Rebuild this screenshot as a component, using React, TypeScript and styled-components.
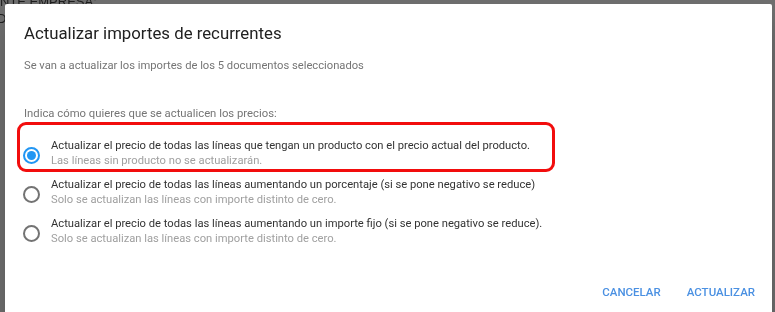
import styled, { createGlobalStyle } from "styled-components"
import { FC } from "react"

const GlobalStyle = createGlobalStyle`
  html, body {
    margin: 0;
    padding: 0;
    height: 100%;
    overflow: hidden;
    font-family: Roboto, "Liberation Sans", sans-serif;
  }
`

interface Option {
  id: number
  label: string
  hint: string
}

const options: Option[] = [
  {
    id: 1,
    label: "Actualizar el precio de todas las líneas que tengan un producto con el precio actual del producto.",
    hint: "Las líneas sin producto no se actualizarán.",
  },
  {
    id: 2,
    label: "Actualizar el precio de todas las líneas aumentando un porcentaje (si se pone negativo se reduce)",
    hint: "Solo se actualizan las líneas con importe distinto de cero.",
  },
  {
    id: 3,
    label: "Actualizar el precio de todas las líneas aumentando un importe fijo (si se pone negativo se reduce).",
    hint: "Solo se actualizan las líneas con importe distinto de cero.",
  },
]

interface RadioProps {
  checked: boolean
}

const Radio: FC<RadioProps> = ({ checked }) => (
  <RadioCircle $checked={checked}>{checked && <RadioDot />}</RadioCircle>
)

const App = () => {
  const selected = 1

  return (
    <>
      <GlobalStyle />
      <Backdrop>
        <BehindText>NTE EMPRESA:</BehindText>
        <BehindText>D</BehindText>
      </Backdrop>
      <Dialog>
        <Title>Actualizar importes de recurrentes</Title>
        <Subtitle>Se van a actualizar los importes de los 5 documentos seleccionados</Subtitle>
        <Question>Indica cómo quieres que se actualicen los precios:</Question>
        <OptionList>
          {options.map(item => (
            <OptionRow key={item.id}>
              <Radio checked={item.id === selected} />
              <OptionText>
                <span className="label">{item.label}</span>
                <span className="hint">{item.hint}</span>
              </OptionText>
            </OptionRow>
          ))}
          <Highlight />
        </OptionList>
        <Actions>
          <TextButton>Cancelar</TextButton>
          <TextButton>Actualizar</TextButton>
        </Actions>
      </Dialog>
    </>
  )
}

export default App

const Backdrop = styled.div`
  position: fixed;
  inset: 0;
  background: #6f6f6f;
  display: flex;
  flex-direction: column;
`

const BehindText = styled.div`
  font-family: "Liberation Sans", Arial, sans-serif;
  font-size: 13px;
  line-height: 14px;
  color: #1e1e1e;
  margin-top: -5px;
  &:nth-child(2) {
    margin-top: 3px;
    margin-left: -3px;
  }
`

const Dialog = styled.div`
  position: absolute;
  top: 4px;
  left: 5px;
  width: 767px;
  height: 330px;
  background: #fff;
  border-radius: 2px;
  box-shadow: 0 11px 15px -7px rgba(0, 0, 0, 0.2), 0 24px 38px 3px rgba(0, 0, 0, 0.14);
  box-sizing: border-box;
  padding: 18px 5px 0 19px;
  display: flex;
  flex-direction: column;
`

const Title = styled.h2`
  margin: 0;
  font-size: 16.8px;
  font-weight: 400;
  line-height: 22px;
  color: #212121;
`

const Subtitle = styled.p`
  margin: 14px 0 0;
  font-size: 11.2px;
  line-height: 16px;
  color: #757575;
`

const Question = styled.p`
  margin: 32px 0 0;
  font-size: 11.3px;
  line-height: 16px;
  color: #757575;
`

const OptionList = styled.div`
  position: relative;
  margin-top: 16px;
  display: flex;
  flex-direction: column;
  gap: 9px;
`

const OptionRow = styled.div`
  display: flex;
  align-items: center;
  gap: 11px;
`

const RadioCircle = styled.span<{ $checked: boolean }>`
  box-sizing: border-box;
  flex: none;
  width: 17px;
  height: 17px;
  margin: 5px 0 0 -1px;
  border-radius: 50%;
  border: 2px solid ${p => (p.$checked ? "#2196f3" : "#737373")};
  display: inline-flex;
  align-items: center;
  justify-content: center;
`

const RadioDot = styled.span`
  width: 9px;
  height: 9px;
  border-radius: 50%;
  background: #2196f3;
`

const OptionText = styled.div`
  display: flex;
  flex-direction: column;
  font-size: 11.2px;
  line-height: 15px;
  .label {
    color: #333;
  }
  .hint {
    color: #a0a0a0;
  }
`

const Highlight = styled.div`
  position: absolute;
  left: -7px;
  top: -16px;
  width: 538px;
  height: 50px;
  box-sizing: border-box;
  border: 3px solid #f20d0d;
  border-radius: 9px;
  pointer-events: none;
`

const Actions = styled.div`
  margin-top: auto;
  margin-bottom: 29px;
  display: flex;
  justify-content: flex-end;
  gap: 2px;
`

const TextButton = styled.button`
  border: none;
  background: transparent;
  font-family: Roboto, "Liberation Sans", sans-serif;
  font-size: 11.5px;
  font-weight: 500;
  text-transform: uppercase;
  color: #4a90e2;
  padding: 6px 12px;
  line-height: 14px;
  cursor: pointer;
`
